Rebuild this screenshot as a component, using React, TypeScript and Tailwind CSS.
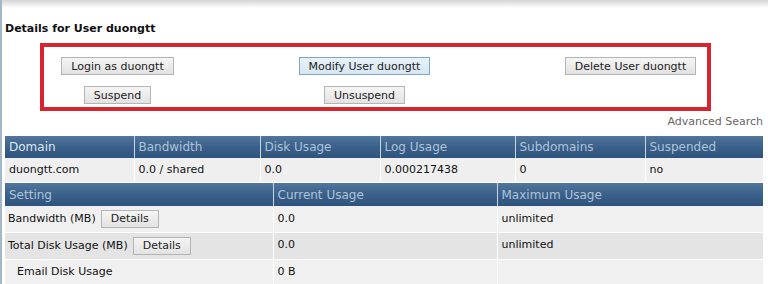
import type { ReactNode } from "react"

const font = { fontFamily: '"DejaVu Sans", Verdana, sans-serif' }

function Btn({ children, active = false }: { children: ReactNode; active?: boolean }) {
  return (
    <button
      type="button"
      className={
        active
          ? "h-[18px] border border-[#7fa6c4] bg-gradient-to-b from-[#e8f2fa] to-[#d6e6f2] px-[9px] text-[11px] leading-none text-[#222]"
          : "h-[18px] border border-[#b4b4b4] bg-gradient-to-b from-[#f5f5f5] to-[#e2e2e2] px-[9px] text-[11px] leading-none text-[#222]"
      }
    >
      {children}
    </button>
  )
}

const domainCols = [
  { label: "Domain", w: "w-[129px]", bold: true },
  { label: "Bandwidth", w: "w-[126px]" },
  { label: "Disk Usage", w: "w-[120px]" },
  { label: "Log Usage", w: "w-[135px]" },
  { label: "Subdomains", w: "w-[130px]" },
  { label: "Suspended", w: "" },
]

const domainRow = ["duongtt.com", "0.0 / shared", "0.0", "0.000217438", "0", "no"]

const headCell =
  "border-r border-[#c9d5e1] last:border-r-0 bg-gradient-to-b from-[#52769c] via-[#3b6089] to-[#2e537d] px-[4px] text-left align-middle text-[12px] font-normal text-[#afc3d8]"

export default function App() {
  return (
    <div className="h-[284px] w-[768px] overflow-hidden border-l-2 border-[#a3b8c4] bg-white text-[11px] text-[#111]" style={font}>
      <div className="h-[8px] bg-gradient-to-b from-[#d4d4d4] to-white" />
      <h1 className="mt-[14px] pl-[3px] text-[11px] font-bold leading-[14px] text-[#111]">Details for User duongtt</h1>

      <div className="ml-[38px] mt-[7px] h-[68px] w-[671px] border-4 border-[#d7252f]">
        <div className="grid grid-cols-[147px_347px_185px] justify-items-center gap-y-[11px] pt-[10px]">
          <Btn>Login as duongtt</Btn>
          <Btn active>Modify User duongtt</Btn>
          <Btn>Delete User duongtt</Btn>
          <Btn>Suspend</Btn>
          <Btn>Unsuspend</Btn>
        </div>
      </div>

      <div className="mt-[4px] flex justify-end pr-[5px] text-[11px] leading-[14px] text-[#666]">Advanced Search</div>

      <div className="ml-[3px] mt-[7px] w-[758px]">
        <table className="w-full table-fixed border-collapse">
          <thead>
            <tr className="h-[22px]">
              {domainCols.map((c) => (
                <th key={c.label} className={`${headCell} ${c.w} ${c.bold ? "font-bold text-[#dde7f1]" : ""}`}>
                  {c.label}
                </th>
              ))}
            </tr>
          </thead>
          <tbody>
            <tr className="h-[24px] bg-[#efefef]">
              {domainRow.map((v, i) => (
                <td key={i} className="border-r border-white px-[4px] last:border-r-0">
                  {v}
                </td>
              ))}
            </tr>
          </tbody>
        </table>

        <table className="mt-px w-full table-fixed border-collapse">
          <thead>
            <tr className="h-[23px]">
              <th className={`${headCell} w-[268px]`}>Setting</th>
              <th className={`${headCell} w-[224px]`}>Current Usage</th>
              <th className={headCell}>Maximum Usage</th>
            </tr>
          </thead>
          <tbody>
            <tr className="h-[26px] bg-[#f0f0f0]">
              <td className="border-r border-white px-[3px]">
                <span className="mr-[5px]">Bandwidth (MB)</span>
                <Btn>Details</Btn>
              </td>
              <td className="border-r border-white px-[4px]">0.0</td>
              <td className="px-[4px]">unlimited</td>
            </tr>
            <tr className="h-[27px] border-t border-white bg-[#e4e4e4]">
              <td className="border-r border-white px-[3px]">
                <span className="mr-[5px]">Total Disk Usage (MB)</span>
                <Btn>Details</Btn>
              </td>
              <td className="border-r border-white px-[4px]">0.0</td>
              <td className="px-[4px]">unlimited</td>
            </tr>
            <tr className="h-[26px] border-t border-white bg-[#f0f0f0]">
              <td className="border-r border-white pl-[12px]">Email Disk Usage</td>
              <td className="border-r border-white px-[4px]">0 B</td>
              <td className="px-[4px]"></td>
            </tr>
          </tbody>
        </table>
      </div>
    </div>
  )
}
